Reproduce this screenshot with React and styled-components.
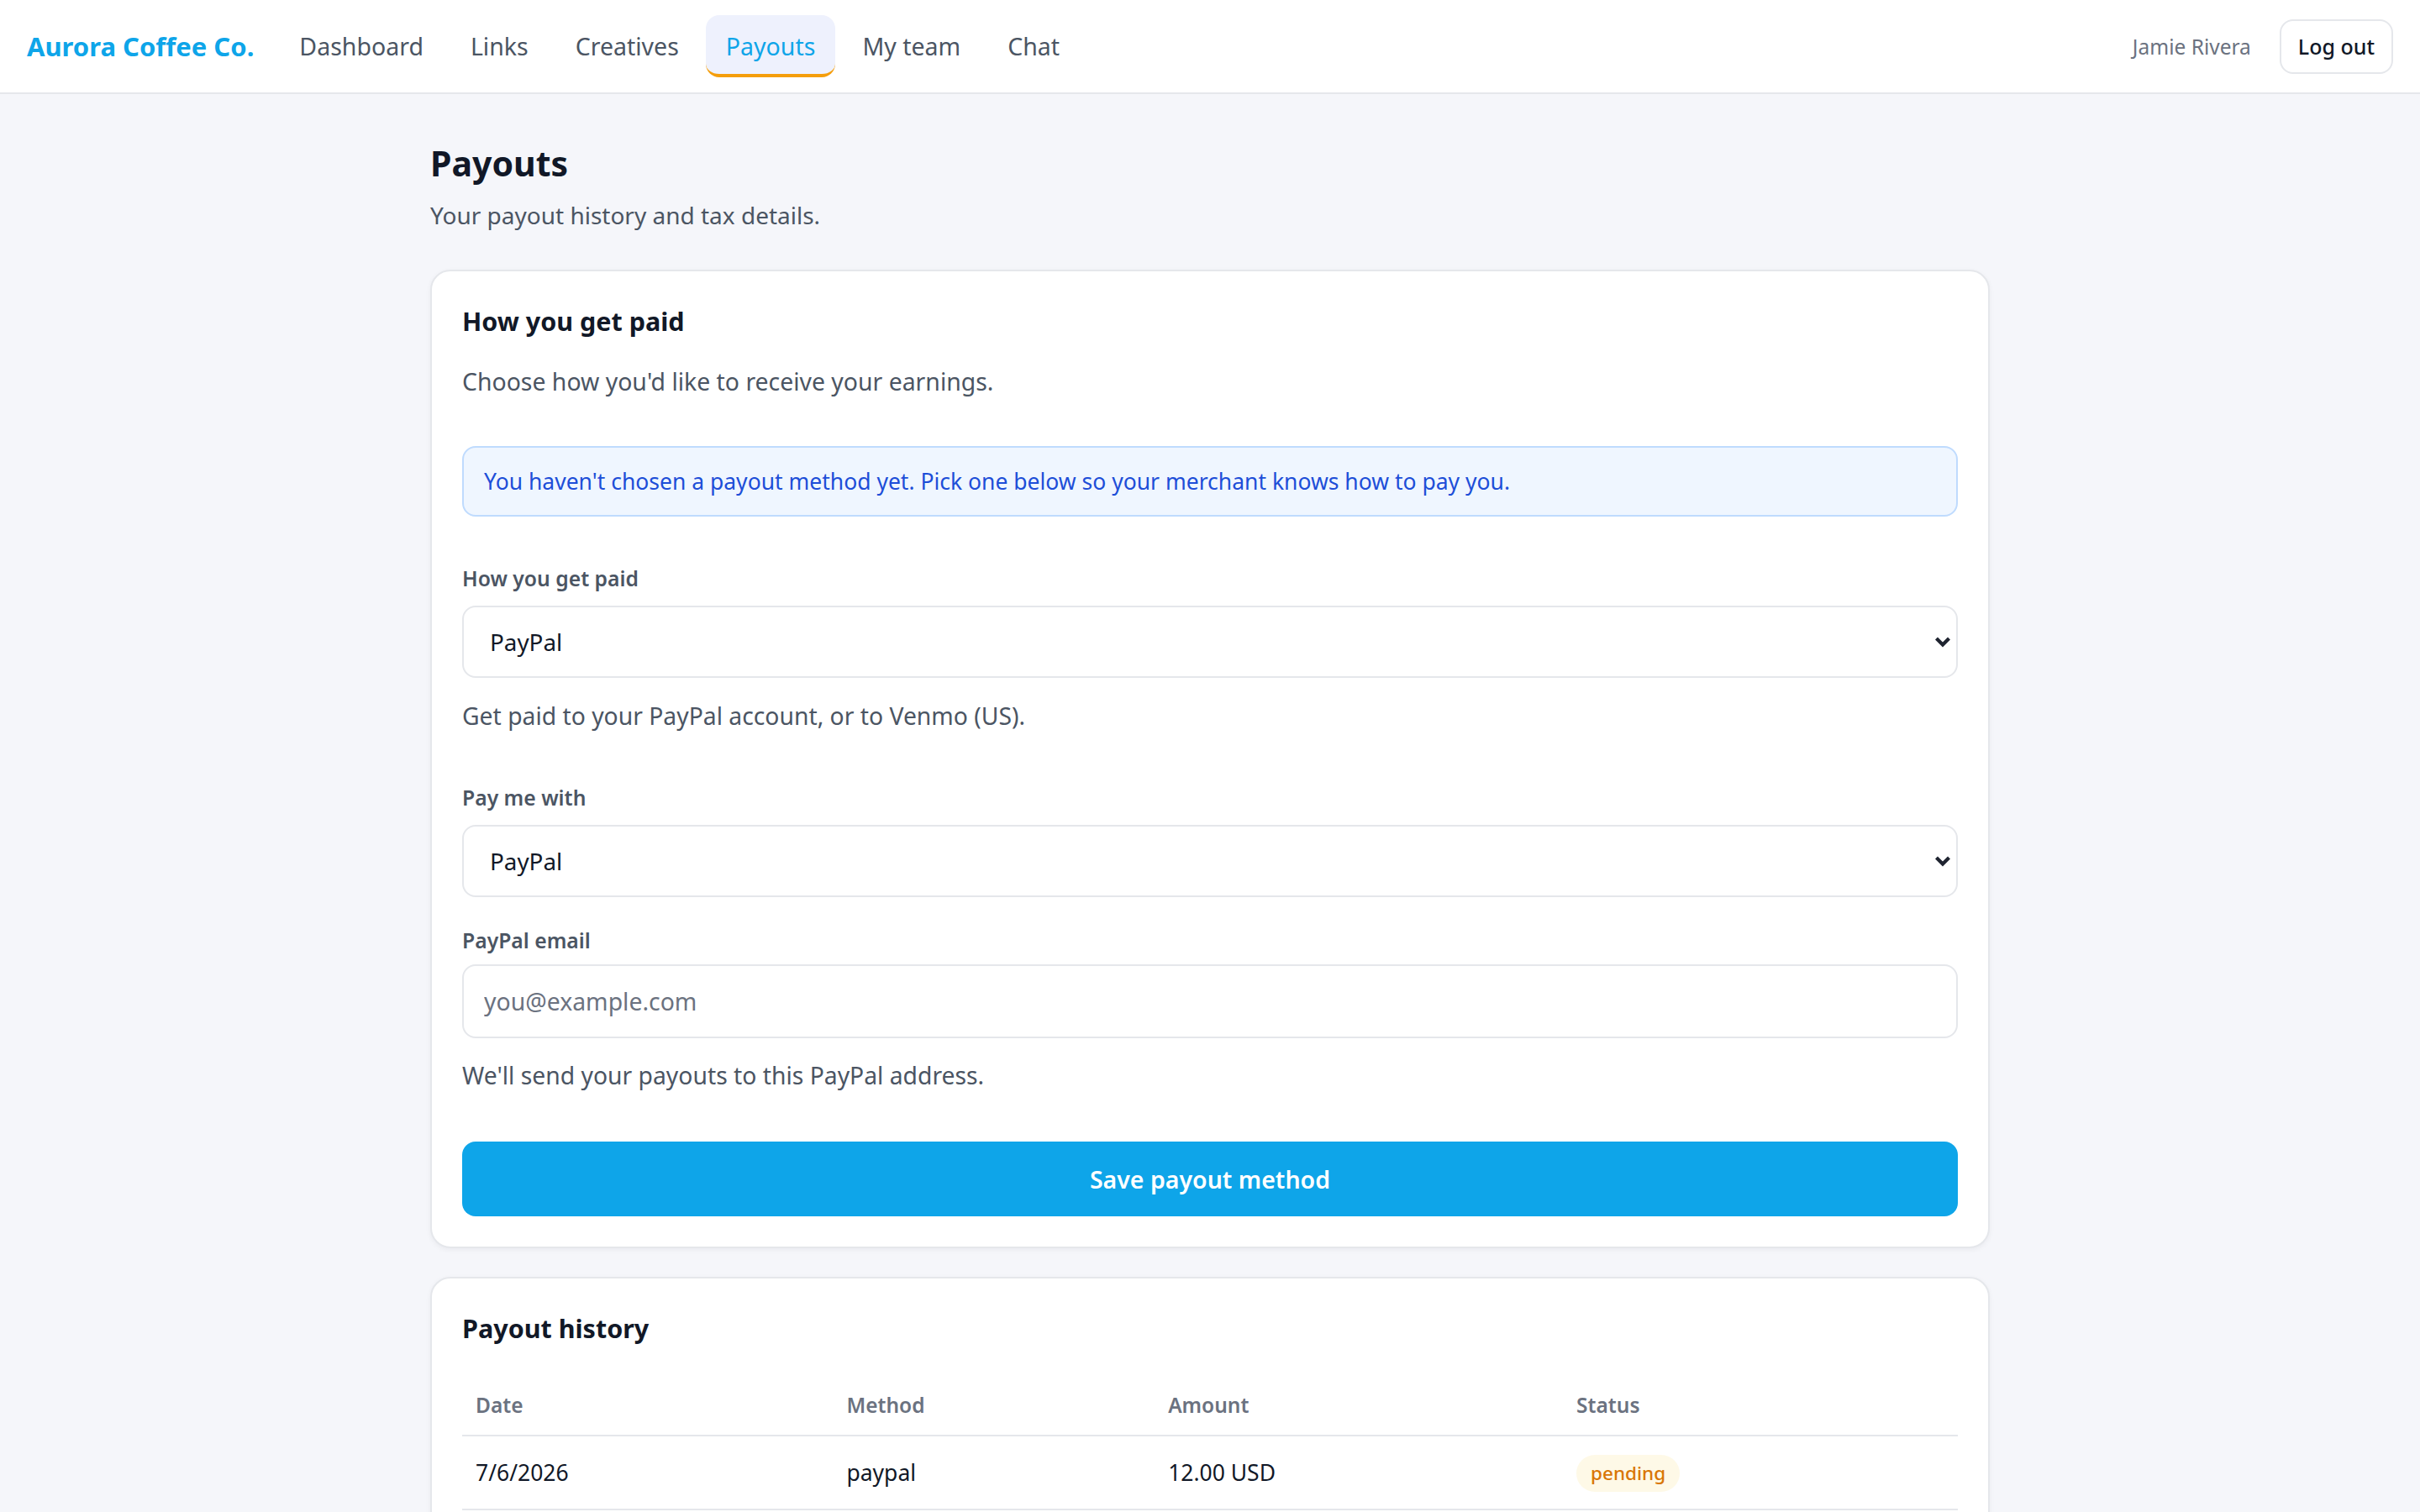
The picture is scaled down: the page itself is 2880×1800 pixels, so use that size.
import styled, {createGlobalStyle} from 'styled-components';

const GlobalStyle = createGlobalStyle`
    * {
        box-sizing: border-box;
    }

    html, body {
        margin: 0;
        padding: 0;
    }

    body {
        background: #f5f6fa;
        font-family: "Noto Sans", "Open Sans", sans-serif;
        color: #111827;
    }
`;

const Header = styled.header`
    height: 112px;
    display: flex;
    align-items: center;
    padding: 0 32px;
    background: #ffffff;
    border-bottom: 2px solid #e5e7eb;
`;

const Brand = styled.div`
    font-size: 31px;
    line-height: 46px;
    font-weight: 700;
    color: #0ea5e9;
    margin-right: 30px;
    white-space: nowrap;
`;

const Nav = styled.nav`
    display: flex;
    align-items: center;
    gap: 8px;
`;

const NavItem = styled.a`
    display: block;
    padding: 16px 24px 12px;
    font-size: 28.5px;
    line-height: 42px;
    border-radius: 16px;
    border-bottom: 4px solid ${({active}) => (active ? '#f59e0b' : 'transparent')};
    background: ${({active}) => (active ? '#eef1fd' : 'transparent')};
    color: ${({active}) => (active ? '#0ea5e9' : '#4b5563')};
    cursor: pointer;
    white-space: nowrap;
`;

const UserArea = styled.div`
    margin-left: auto;
    display: flex;
    align-items: center;
    gap: 34px;
`;

const UserName = styled.span`
    font-size: 24.5px;
    color: #6b7280;
`;

const LogoutButton = styled.button`
    font-family: inherit;
    font-size: 25px;
    font-weight: 500;
    line-height: 41px;
    padding: 10px 20px;
    color: #111827;
    background: #ffffff;
    border: 2px solid #e5e7eb;
    border-radius: 16px;
    cursor: pointer;
`;

const Main = styled.main`
    max-width: 1920px;
    margin: 0 auto;
    padding: 55px 32px 64px;
`;

const Title = styled.h1`
    margin: 0;
    font-size: 41px;
    line-height: 55px;
    font-weight: 700;
    color: #111827;
`;

const Subtitle = styled.p`
    margin: 12px 0 0;
    font-size: 28px;
    line-height: 45px;
    color: #4b5563;
`;

const Card = styled.section`
    margin-top: ${({first}) => (first ? '42px' : '34px')};
    background: #ffffff;
    border: 2px solid #e5e7eb;
    border-radius: 24px;
    padding: 36px;
    box-shadow: 0 2px 6px rgba(17, 24, 39, 0.05);
`;

const CardTitle = styled.h2`
    margin: 0;
    font-size: 30.5px;
    line-height: 46px;
    font-weight: 700;
    color: #111827;
`;

const CardText = styled.p`
    margin: 27px 0 0;
    font-size: 28.4px;
    line-height: 45px;
    color: #4b5563;
`;

const Alert = styled.div`
    margin-top: 54px;
    padding: 19px 24px;
    font-size: 26.5px;
    line-height: 42px;
    color: #1d4ed8;
    background: #eff6ff;
    border: 2px solid #bfdbfe;
    border-radius: 16px;
`;

const Label = styled.label`
    display: block;
    margin-top: ${({gap}) => gap}px;
    font-size: 24.7px;
    line-height: 39px;
    font-weight: 600;
    color: #4b5563;
`;

const SelectWrap = styled.div`
    position: relative;
    margin-top: 13px;
`;

const Select = styled.select`
    display: block;
    width: 100%;
    height: 86px;
    padding: 0 64px 0 31px;
    font-family: inherit;
    font-size: 27.8px;
    color: #111827;
    background: #ffffff;
    border: 2px solid #e5e7eb;
    border-radius: 16px;
    appearance: none;
    -webkit-appearance: none;
    outline: none;
`;

const Chevron = styled.svg`
    position: absolute;
    right: 8px;
    top: 50%;
    transform: translateY(-50%);
    pointer-events: none;
`;

const Input = styled.input`
    display: block;
    width: 100%;
    height: 88px;
    margin-top: 9px;
    padding: 0 24px;
    font-family: inherit;
    font-size: 28.4px;
    color: #111827;
    background: #ffffff;
    border: 2px solid #e5e7eb;
    border-radius: 16px;
    outline: none;

    &::placeholder {
        color: #6b7280;
    }
`;

const Help = styled.p`
    margin: ${({gap}) => gap}px 0 0;
    font-size: 28.3px;
    line-height: 45px;
    color: #4b5563;
`;

const PrimaryButton = styled.button`
    display: block;
    width: 100%;
    height: 89px;
    margin-top: 56px;
    font-family: inherit;
    font-size: 28.5px;
    font-weight: 600;
    color: #ffffff;
    background: #0ea5e9;
    border: none;
    border-radius: 16px;
    cursor: pointer;
`;

const Table = styled.table`
    width: 100%;
    margin-top: 33px;
    border-collapse: collapse;
    table-layout: fixed;
`;

const Th = styled.th`
    width: ${({w}) => w};
    padding: 16px;
    text-align: left;
    font-size: 24.5px;
    line-height: 39px;
    font-weight: 600;
    color: #6b7280;
    border-bottom: 2px solid #e5e7eb;
`;

const Td = styled.td`
    padding: 20px 16px;
    font-size: 26.5px;
    line-height: 42px;
    color: #111827;
    vertical-align: middle;
    border-bottom: 2px solid #e5e7eb;
`;

const Badge = styled.span`
    display: inline-block;
    height: 44px;
    padding: 0 17px;
    font-size: 22.5px;
    line-height: 44px;
    font-weight: 500;
    color: #d97706;
    background: #fef9e7;
    border-radius: 22px;
    vertical-align: middle;
`;

const ChevronIcon = () => (
    <Chevron width="20" height="14" viewBox="0 0 20 14">
        <path d="M2.5 3 L10 10.5 L17.5 3" fill="none" stroke="#1f2430" strokeWidth="4.2"/>
    </Chevron>
);

const navLinks = ['Dashboard', 'Links', 'Creatives', 'Payouts', 'My team', 'Chat'];

const payouts = [
    {date: '7/6/2026', method: 'paypal', amount: '12.00 USD', status: 'pending'},
];

const App = () => (
    <>
        <GlobalStyle/>
        <Header>
            <Brand>Aurora Coffee Co.</Brand>
            <Nav>
                {navLinks.map(link => (
                    <NavItem key={link} active={link === 'Payouts'}>{link}</NavItem>
                ))}
            </Nav>
            <UserArea>
                <UserName>Jamie Rivera</UserName>
                <LogoutButton>Log out</LogoutButton>
            </UserArea>
        </Header>
        <Main>
            <Title>Payouts</Title>
            <Subtitle>Your payout history and tax details.</Subtitle>

            <Card first>
                <CardTitle>How you get paid</CardTitle>
                <CardText>Choose how you'd like to receive your earnings.</CardText>
                <Alert>
                    You haven't chosen a payout method yet. Pick one below so your merchant knows how to pay you.
                </Alert>

                <Label gap={54}>How you get paid</Label>
                <SelectWrap>
                    <Select defaultValue="paypal">
                        <option value="paypal">PayPal</option>
                        <option value="bank">Bank transfer</option>
                    </Select>
                    <ChevronIcon/>
                </SelectWrap>
                <Help gap={23}>Get paid to your PayPal account, or to Venmo (US).</Help>

                <Label gap={55}>Pay me with</Label>
                <SelectWrap>
                    <Select defaultValue="paypal">
                        <option value="paypal">PayPal</option>
                        <option value="venmo">Venmo</option>
                    </Select>
                    <ChevronIcon/>
                </SelectWrap>

                <Label gap={32}>PayPal email</Label>
                <Input type="email" placeholder="you@example.com"/>
                <Help gap={22}>We'll send your payouts to this PayPal address.</Help>

                <PrimaryButton>Save payout method</PrimaryButton>
            </Card>

            <Card>
                <CardTitle>Payout history</CardTitle>
                <Table>
                    <thead>
                    <tr>
                        <Th w="24.8%">Date</Th>
                        <Th w="21.5%">Method</Th>
                        <Th w="27.3%">Amount</Th>
                        <Th w="26.4%">Status</Th>
                    </tr>
                    </thead>
                    <tbody>
                    {payouts.map((p, index) => (
                        <tr key={index}>
                            <Td>{p.date}</Td>
                            <Td>{p.method}</Td>
                            <Td>{p.amount}</Td>
                            <Td><Badge>{p.status}</Badge></Td>
                        </tr>
                    ))}
                    </tbody>
                </Table>
            </Card>
        </Main>
    </>
);

export default App;
